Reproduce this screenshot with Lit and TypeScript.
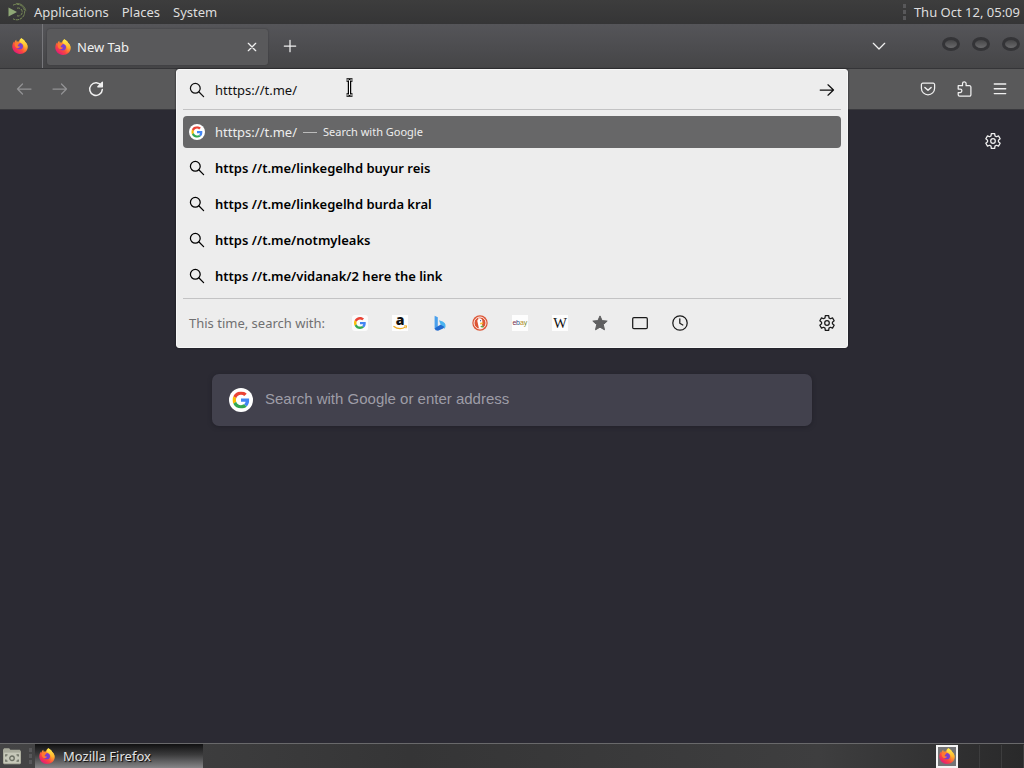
import { LitElement, html, css, svg, type SVGTemplateResult } from "lit";
import { customElement, property } from "lit/decorators.js";

function gearPath(cx: number, cy: number, inner: number, outer: number): string {
  const points: string[] = [];
  for (let tooth = 0; tooth < 6; tooth++) {
    const base = -90 + tooth * 60;
    const corners: [number, number][] = [
      [base - 21, inner],
      [base - 13, outer],
      [base + 13, outer],
      [base + 21, inner],
    ];
    for (const [angle, radius] of corners) {
      const a = (angle * Math.PI) / 180;
      points.push(`${(cx + radius * Math.cos(a)).toFixed(2)} ${(cy + radius * Math.sin(a)).toFixed(2)}`);
    }
  }
  return `M${points.join("L")}Z`;
}

const googleG = svg`
  <path fill="#ea4335" d="M24 9.5c3.54 0 6.71 1.22 9.21 3.6l6.85-6.85C35.9 2.38 30.47 0 24 0 14.62 0 6.51 5.38 2.56 13.22l7.98 6.19C12.43 13.72 17.74 9.5 24 9.5z"/>
  <path fill="#4285f4" d="M46.98 24.55c0-1.57-.15-3.09-.38-4.55H24v9.02h12.94c-.58 2.96-2.26 5.48-4.78 7.18l7.73 6c4.51-4.18 7.09-10.36 7.09-17.65z"/>
  <path fill="#fbbc05" d="M10.53 28.59c-.48-1.45-.76-2.99-.76-4.59s.27-3.14.76-4.59l-7.98-6.19C.92 16.46 0 20.12 0 24s.92 7.54 2.56 10.78l7.97-6.19z"/>
  <path fill="#34a853" d="M24 48c6.48 0 11.93-2.13 15.89-5.81l-7.73-6c-2.15 1.45-4.92 2.3-8.16 2.3-6.26 0-11.57-4.22-13.47-9.91l-7.98 6.19C6.51 42.62 14.62 48 24 48z"/>`;

const line = (body: SVGTemplateResult) =>
  svg`<g fill="none" stroke="currentColor" stroke-width="1.25" stroke-linecap="round" stroke-linejoin="round">${body}</g>`;

const icons: Record<string, SVGTemplateResult> = {
  search: line(svg`<circle cx="6.3" cy="6.3" r="4.9"/><path d="M10 10l4.600 4.600"/>`),
  back: line(svg`<path d="M15 8H1.500M6.500 3L1.500 8l5 5"/>`),
  forward: line(svg`<path d="M1 8h13.500M9.500 3l5 5-5 5"/>`),
  go: line(svg`<path d="M1.200 8h13.300M9 2.800L14.500 8 9 13.200"/>`),
  reload: line(svg`<path stroke-width="1.500" d="M13.300 4.700A6.300 6.300 0 1 0 14.300 8.600"/><path fill="currentColor" d="M14.400 1.200v4.600H9.800z"/>`),
  close: line(svg`<path d="M4.300 4.300l7.400 7.400M11.700 4.300l-7.400 7.400"/>`),
  plus: line(svg`<path d="M8 2.300v11.400M2.300 8h11.400"/>`),
  chevron: line(svg`<path d="M2.300 5.300L8 11l5.700-5.700"/>`),
  pocket: line(svg`<path d="M2.800 2.200h10.400a1.400 1.400 0 0 1 1.400 1.400v3.600a6.600 6.600 0 0 1-13.200 0V3.600a1.400 1.400 0 0 1 1.400-1.400z"/><path stroke-width="1.500" d="M4.900 6.500L8 9.300l3.100-2.800"/>`),
  puzzle: line(svg`<path d="M2.200 4.700h4.300V2.600a1.800 1.800 0 0 1 3.600 0v2.100h3.400a1.400 1.400 0 0 1 1.400 1.400v7.700a1.400 1.400 0 0 1-1.400 1.400H3.600a1.400 1.400 0 0 1-1.400-1.400v-2.300h2a1.700 1.700 0 0 0 0-3.400h-2z"/>`),
  menu: line(svg`<path stroke-width="1.400" d="M2.300 3h11.400M2.300 7.800h11.400M2.300 12.600h11.400"/>`),
  gear: line(svg`<path d=${gearPath(8, 8, 5.5, 7.5)}/><circle cx="8" cy="8" r="2.300"/>`),
  star: svg`<path fill="#5f5f60" stroke="#5f5f60" stroke-linejoin="round" d="M8 .9l2.100 4.700 5.100.5-3.900 3.500 1.200 5.200L8 12.200l-4.500 2.600 1.200-5.200L.8 6.100l5.100-.5z"/>`,
  tabs: line(svg`<rect x=".7" y="2.600" width="14.600" height="11" rx="1.200"/>`),
  clock: line(svg`<circle cx="8" cy="8" r="7.200"/><path d="M7.800 3.800v4.500l3 1.700"/>`),
  google: svg`<rect width="16" height="16" rx="3" fill="#fbfbfb"/><svg x="2" y="2" width="12" height="12" viewBox="0 0 48 48">${googleG}</svg>`,
  googleRound: svg`<circle cx="8" cy="8" r="8" fill="#fff"/><svg x="2.300" y="2.300" width="11.400" height="11.400" viewBox="0 0 48 48">${googleG}</svg>`,
  amazon: svg`<rect width="16" height="16" fill="#fdfdfd"/>
    <text x="8" y="10" text-anchor="middle" font-family="Open Sans, sans-serif" font-weight="800" font-size="14" fill="#111">a</text>
    <path d="M1.500 11.200q6 4.500 12 .8" fill="none" stroke="#f0a81c" stroke-width="1.300"/><path d="M12 11l2.600-.2-.6 2.500" fill="none" stroke="#f0a81c"/>`,
  bing: svg`<path fill="#4aa0ec" d="M2.600.8l3.200 1.500v10L2.600 14z"/><path fill="#2169cf" d="M2.600 13.500l3.200-2.300 4.500-2.400 3 .8q-.2 2.600-2.200 3.900L6 15.700q-3 0-3.400-2.200z"/><path fill="#4bb4f0" d="M7 5.200l3.700 1.400q2.900 1.300 2.900 4.300-.1 2-1.500 3l-.2-2.300-3.200-1.800z"/>`,
  duck: svg`<circle cx="8" cy="8" r="7.700" fill="#dc5535"/><circle cx="8" cy="8" r="6" fill="none" stroke="#fff" stroke-width=".9"/>
    <path fill="#fff" d="M6.200 3.300c3-.4 4.400 1 4.200 3.500l-.4 2.800 1 3.500c-1.500.8-2.900.7-4 .3L5.600 7.200c-.4-1.600-.3-2.500.8-3z"/><path fill="#f6b92e" d="M8.200 7.700l3.100-.2-.3 1.500-2.700.4z"/><path fill="#5aa94a" d="M8.500 11l2.700-.4.200 2-2.600-.3z"/><circle cx="8.600" cy="5.700" r=".6" fill="#33518b"/>`,
  ebay: svg`<rect width="16" height="16" fill="#fdfdfd"/>
    <text y="10" font-family="Liberation Sans, sans-serif" font-size="7"><tspan x="0.500" fill="#7b2f46">e</tspan><tspan x="4" fill="#2f4a86">b</tspan><tspan x="8" fill="#b58a20">a</tspan><tspan x="11.700" fill="#7d9028">y</tspan></text>`,
  wikipedia: svg`<rect width="16" height="16" fill="#fdfdfd"/>
    <text x="8" y="13" text-anchor="middle" font-family="Liberation Serif, serif" font-size="14.500" fill="#111">W</text>`,
  firefox: svg`
    <defs>
      <linearGradient id="flame" x1=".85" y1=".1" x2=".2" y2=".95"><stop offset="0" stop-color="#ffdf45"/><stop offset=".35" stop-color="#ff9a2e"/><stop offset=".65" stop-color="#fb4a3d"/><stop offset="1" stop-color="#e3167c"/></linearGradient>
      <linearGradient id="crest" x1=".5" y1="0" x2=".5" y2="1"><stop offset="0" stop-color="#fff04f"/><stop offset=".6" stop-color="#ffb62f"/><stop offset="1" stop-color="#ff5a38"/></linearGradient>
    </defs>
    <path fill="url(#flame)" d="M9.300.2c2.400 1.200 3.500 2.600 3.900 3.700 1.600 1.100 2.500 3 2.500 5 0 4-3.400 7-7.700 7S.3 12.700.3 8.600c0-2.300.8-4 1.700-5l.3 1.300c.3-1.500 1.200-2.700 2-3.200l.2 1.900c.8-.3 1.600-.3 2.400 0C7.100 2.200 8 1 9.300.2z"/>
    <circle cx="7.900" cy="8.200" r="3.100" fill="#7a3fd0"/>
    <path fill="#ff7a30" d="M2.700 5.700c1.500-1.600 3.300-1.800 4.800-1.100L7.300 6l-1.600.9c0 1.200 1.200 1.800 2.300 1.500-.5 1.400-2.100 2-3.700 1.300-1.200-1-1.800-2.400-1.600-4z"/>
    <path fill="url(#crest)" d="M9.300.2c2.400 1.200 3.500 2.600 3.900 3.700 2.300 1.900 2.900 5.600.8 8.300-1 1.100-2.200 1.700-3.200 1.800 2-1.700 2.200-4.400.9-6.400C10.900 6 8.700 5.200 8 3.500 7.900 2.200 8.300 1 9.300.2z"/>`,
  distro: svg`<path fill="#8fa876" d="M-.5 3.500l8.500 4.500-8.500 4.500z"/><g fill="none" stroke="#81975b" stroke-width=".9"><path d="M4 1.200a7.800 7.800 0 1 1 0 13.600" stroke-dasharray="3 .7"/><path d="M7-.6a8.900 8.900 0 0 1 9.900 7.800" opacity=".7"/><path d="M8 4.200a4 4 0 1 1 0 7.600" stroke-dasharray="3 1"/></g>`,
  files: svg`<path fill="#a9ab9c" d="M0 2.500L1 1h4.500l1 1.500H15l1 1.500v10.500l-1 .8H1l-1-.8z"/><path fill="#c6c8b9" d="M.8 5h14.400v9.300H.8z"/><path fill="none" stroke="#6c7064" stroke-width="1.200" d="M4 7H2.500v1.500M2.500 11v1.500H4M12 7h1.500v1.500M13.500 11v1.500H12"/><circle cx="8" cy="10" r="2" fill="none" stroke="#6c7064" stroke-width="1.200"/>`,
};

@customElement("ui-icon")
class UiIcon extends LitElement {
  @property() name = "";
  static styles = css`
    :host { display: block; flex: none; width: 16px; height: 16px; }
    .glyph { display: block; width: 100%; height: 100%; overflow: visible; }
  `;
  render() {
    return html`<svg class="glyph" viewBox="0 0 16 16" aria-hidden="true">${icons[this.name]}</svg>`;
  }
}

const controls = css`
  button, input { font: inherit; color: inherit; border: 0; margin: 0; padding: 0; background: none; }
  button { display: flex; align-items: center; justify-content: center; }
  input { outline: none; min-width: 0; }
`;

@customElement("url-dropdown")
class UrlDropdown extends LitElement {
  static styles = [controls, css`
    :host { display: block; box-sizing: border-box; padding: 0 6px; font-size: 13px; color: #111; background: #ededed; border: 1px solid #f6f6f6; border-radius: 3px; box-shadow: 0 0 2px #16161a; }
    .field { display: flex; align-items: center; height: 39px; gap: 10px; padding: 0 6px; border-bottom: 1px solid #c3c3c4; }
    .query { flex: 1; height: 32px; }
    .results { list-style: none; margin: 0; padding: 6px 0; display: grid; gap: 4px; border-bottom: 1px solid #c3c3c4; }
    .result { width: 100%; height: 32px; justify-content: flex-start; gap: 10px; padding: 0 6px; border-radius: 4px; font-weight: 600; color: #000; }
    .selected { background: #676768; color: #ededed; font-weight: 400; }
    .action { display: flex; align-items: center; gap: 6px; margin-left: -4px; font-size: 11px; }
    .dash { width: 14px; height: 1px; background: #bcbcbc; }
    .engines { display: flex; align-items: center; height: 48px; padding: 0 6px; color: #1a1a1a; }
    .hint { color: #707071; margin-right: 15px; }
    .engine { width: 40px; height: 32px; }
    .settings { margin-left: auto; }
  `];
  render() {
    const suggestions = [
      "https //t.me/linkegelhd buyur reis",
      "https //t.me/linkegelhd burda kral",
      "https //t.me/notmyleaks",
      "https //t.me/vidanak/2 here the link",
    ];
    const engines = [
      ["google", "Google"], ["amazon", "Amazon"], ["bing", "Bing"], ["duck", "DuckDuckGo"], ["ebay", "eBay"],
      ["wikipedia", "Wikipedia"], ["star", "Bookmarks"], ["tabs", "Tabs"], ["clock", "History"],
    ];
    return html`
      <div class="field">
        <ui-icon name="search"></ui-icon>
        <input class="query" type="text" aria-label="Address" .value=${"htttps://t.me/"} />
        <button aria-label="Go"><ui-icon name="go"></ui-icon></button>
      </div>
      <ul class="results">
        <li>
          <button class="result selected">
            <ui-icon name="googleRound"></ui-icon><span>htttps://t.me/</span>
            <span class="action"><span class="dash"></span>Search with Google</span>
          </button>
        </li>
        ${suggestions.map((s) => html`<li><button class="result"><ui-icon name="search"></ui-icon><span>${s}</span></button></li>`)}
      </ul>
      <div class="engines">
        <span class="hint">This time, search with:</span>
        ${engines.map(([icon, label]) => html`<button class="engine" aria-label=${label}><ui-icon name=${icon}></ui-icon></button>`)}
        <button class="settings" aria-label="Search settings"><ui-icon name="gear"></ui-icon></button>
      </div>`;
  }
}

@customElement("app-root")
class AppRoot extends LitElement {
  static styles = [controls, css`
    :host { display: flex; flex-direction: column; min-height: 100vh; font: 13px/20px "Noto Sans", sans-serif; color: #f0f0f0; background: #2b2a33; overflow: hidden; }
    .panel { display: flex; align-items: center; height: 24px; box-sizing: border-box; padding: 0 4px 0 9px; background: linear-gradient(#3d3d3d, #353536); color: #dedede; }
    .menus { display: flex; align-items: center; gap: 13px; margin-left: 9px; }
    .clock { margin-left: auto; display: flex; align-items: center; gap: 8px; }
    .grip { width: 3px; height: 17px; background: repeating-linear-gradient(#58585a 0 4px, transparent 4px 6px); }
    .tabstrip { display: flex; align-items: center; height: 45px; box-sizing: border-box; background: linear-gradient(#555559, #454547); border-bottom: 1px solid #353538; }
    .pinned { width: 43px; height: 44px; box-sizing: border-box; padding-right: 2px; border-right: 1px solid #77777b; }
    .tab { display: flex; align-items: center; gap: 6px; width: 221px; height: 36px; box-sizing: border-box; margin: 2px 5px 0 4px; padding: 0 8px; background: #59595b; border-radius: 3px; box-shadow: 0 0 2px #37373a; }
    .tab-title { flex: 1; }
    .add { width: 34px; height: 34px; }
    .all-tabs { width: 36px; height: 36px; margin-left: auto; }
    .window { display: flex; gap: 12px; margin: 0 4px 4px 45px; }
    .orb { width: 18px; height: 14px; box-sizing: border-box; border-radius: 50%; border: 3px solid #343437; background: linear-gradient(#454547, #6a6a6c); }
    .toolbar { position: relative; z-index: 1; display: flex; align-items: center; height: 41px; box-sizing: border-box; padding: 0 6px; background: #59595a; border-bottom: 1px solid #39393d; }
    .tool { width: 36px; height: 36px; }
    .disabled { color: #929294; }
    .address { position: relative; flex: 1; align-self: stretch; margin: 0 62px; }
    .dropdown { position: absolute; top: 0; left: 0; right: 0; }
    .pointer { position: absolute; left: 169px; top: 9px; width: 9px; height: 19px; }
    .page { flex: 1; display: flex; flex-direction: column; align-items: center; padding: 19px 19px 0; }
    .personalize { align-self: flex-end; width: 24px; height: 24px; }
    .search { display: flex; align-items: center; gap: 12px; width: 100%; max-width: 600px; height: 52px; box-sizing: border-box; margin-top: 221px; padding: 0 17px; background: #42414d; border-radius: 7px; box-shadow: 0 1px 4px #222129; }
    .search-logo { width: 24px; height: 24px; }
    .search-input { flex: 1; height: 40px; box-sizing: border-box; padding-bottom: 4px; font: 15px/20px "Liberation Sans", sans-serif; }
    .search-input::placeholder { color: #9e9da7; opacity: 1; }
    .taskbar { display: flex; align-items: stretch; height: 25px; box-sizing: border-box; border-top: 1px solid #69696b; background: linear-gradient(90deg, #444445, #353536 40%, #3e3e3f 80%, #29292a); color: #e4e4e4; }
    .files { width: 18px; height: 18px; }
    .launcher { display: flex; align-items: center; gap: 8px; padding-left: 3px; margin-right: 3px; }
    .task { width: 168px; justify-content: flex-start; gap: 8px; padding: 0 4px; background: linear-gradient(#101011, #3c3c3d 45%, #868688); text-shadow: 1px 1px 1px #000; }
    .workspaces { margin-left: auto; display: flex; align-items: center; }
    .workspace { width: 22px; height: 23px; box-sizing: border-box; border-right: 1px solid #3d3d3e; }
    .current { border: 2px solid #f4f4f4; background: #747476; }
  `];
  render() {
    return html`
      <header class="panel">
        <ui-icon name="distro"></ui-icon>
        <nav class="menus"><button>Applications</button><button>Places</button><button>System</button></nav>
        <div class="clock"><span class="grip"></span><time>Thu Oct 12, 05:09</time></div>
      </header>
      <div class="tabstrip">
        <button class="pinned" aria-label="Pinned tab"><ui-icon name="firefox"></ui-icon></button>
        <div class="tab">
          <ui-icon name="firefox"></ui-icon><span class="tab-title">New Tab</span>
          <button aria-label="Close tab"><ui-icon name="close"></ui-icon></button>
        </div>
        <button class="add" aria-label="New tab"><ui-icon name="plus"></ui-icon></button>
        <button class="all-tabs" aria-label="List all tabs"><ui-icon name="chevron"></ui-icon></button>
        <div class="window">
          <button class="orb" aria-label="Minimize"></button><button class="orb" aria-label="Maximize"></button><button class="orb" aria-label="Close window"></button>
        </div>
      </div>
      <div class="toolbar">
        <button class="tool disabled" aria-label="Back"><ui-icon name="back"></ui-icon></button>
        <button class="tool disabled" aria-label="Forward"><ui-icon name="forward"></ui-icon></button>
        <button class="tool" aria-label="Reload"><ui-icon name="reload"></ui-icon></button>
        <div class="address">
          <url-dropdown class="dropdown"></url-dropdown>
          <svg class="pointer" viewBox="0 0 9 19" aria-hidden="true">
            <path d="M1.500 2h2.300l.7.700.7-.7h2.300M4.500 2.500v14M1.500 17h2.300l.7-.7.7.7h2.300" fill="none" stroke="#000" stroke-width="3.400"/>
            <path d="M1.500 2h2.300l.7.700.7-.7h2.300M4.500 2.500v14M1.500 17h2.300l.7-.7.7.7h2.300" fill="none" stroke="#fff" stroke-width="1"/>
          </svg>
        </div>
        <button class="tool" aria-label="Save to Pocket"><ui-icon name="pocket"></ui-icon></button>
        <button class="tool" aria-label="Extensions"><ui-icon name="puzzle"></ui-icon></button>
        <button class="tool" aria-label="Menu"><ui-icon name="menu"></ui-icon></button>
      </div>
      <main class="page">
        <button class="personalize" aria-label="Personalize new tab"><ui-icon name="gear"></ui-icon></button>
        <label class="search">
          <ui-icon class="search-logo" name="googleRound"></ui-icon>
          <input class="search-input" type="text" aria-label="Search" placeholder="Search with Google or enter address" />
        </label>
      </main>
      <footer class="taskbar">
        <div class="launcher"><button aria-label="Files"><ui-icon class="files" name="files"></ui-icon></button><span class="grip"></span></div>
        <button class="task"><ui-icon name="firefox"></ui-icon>Mozilla Firefox</button>
        <div class="workspaces">
          <button class="workspace current" aria-label="Workspace 1"><ui-icon name="firefox"></ui-icon></button>
          <button class="workspace" aria-label="Workspace 2"></button>
          <button class="workspace" aria-label="Workspace 3"></button>
          <button class="workspace" aria-label="Workspace 4"></button>
        </div>
      </footer>`;
  }
}
